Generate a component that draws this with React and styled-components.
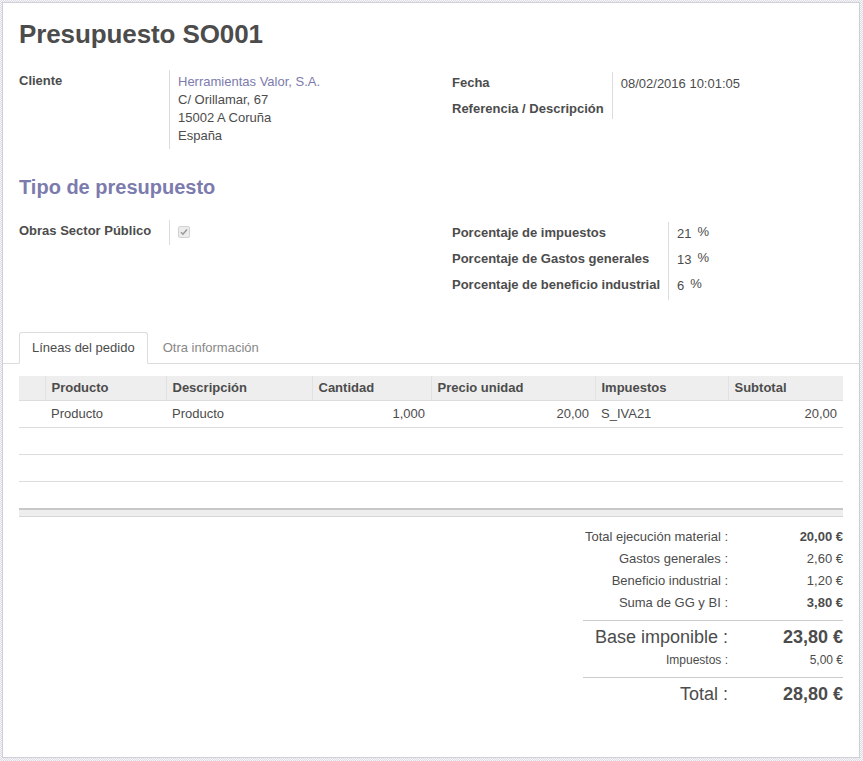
import React from 'react'
import styled, { createGlobalStyle } from 'styled-components'

const GlobalStyle = createGlobalStyle`
  html, body {
    margin: 0;
    padding: 0;
    height: 100%;
  }
  body {
    font-family: "Liberation Sans", Arial, sans-serif;
    font-size: 13px;
    color: #4c4c4c;
    background-color: #fff;
    background-image: repeating-conic-gradient(#dcdce4 0 25%, #f7f7f9 0 50%);
    background-size: 2px 2px;
  }
  #root { height: 100%; }
`

const Page = styled.div`
  box-sizing: border-box;
  height: 100%;
  padding: 2px 3px 3px 2px;
  display: flex;
`

const Sheet = styled.div`
  box-sizing: border-box;
  flex: 1;
  background: #fff;
  border: 1px solid #cfcfd8;
  padding: 16px 16px;
  display: flex;
  flex-direction: column;
`

const Title = styled.h1`
  margin: 0;
  font-size: 26px;
  line-height: 30px;
  font-weight: bold;
  color: #4c4c4c;
  letter-spacing: -0.1px;
`

const Groups = styled.div`
  display: grid;
  grid-template-columns: 433px 1fr;
  align-items: start;
  margin-top: ${p => p.$top}px;
`

const Group = styled.div`
  display: grid;
  grid-template-columns: minmax(150px, max-content) 1fr;
  align-content: start;
  margin-top: ${p => p.$drop || 0}px;
`

const Label = styled.div`
  font-weight: bold;
  line-height: 18px;
  padding: 2px 8px 1px 0;
  white-space: nowrap;
`

const Value = styled.div`
  border-left: 1px solid #dcdcdc;
  line-height: 18px;
  padding: 3px 0 ${p => (p.$tight ? 4 : 5)}px 8px;
`

const Link = styled.div`
  color: #7c7bad;
`

const Percent = styled.span`
  display: inline-block;
  margin-left: 6px;
  vertical-align: top;
  line-height: 14px;
`

const Check = styled.span`
  display: inline-flex;
  align-items: center;
  justify-content: center;
  box-sizing: border-box;
  width: 12px;
  height: 12px;
  border: 1px solid #d2d2d2;
  border-radius: 2px;
  background: #ececec;
`

const SectionTitle = styled.h2`
  margin: 26px 0 0 0;
  font-size: 20px;
  line-height: 24px;
  font-weight: bold;
  color: #7c7bad;
`

const Tabs = styled.div`
  display: flex;
  margin: 32px -16px 0 -16px;
  padding: 0 16px;
  border-bottom: 1px solid #dcdcdc;
`

const Tab = styled.div`
  margin-right: 2px;
  margin-bottom: -1px;
  padding: 6px 12px;
  line-height: 18px;
  border: 1px solid ${p => (p.$active ? '#dcdcdc' : 'transparent')};
  border-bottom-color: ${p => (p.$active ? '#fff' : 'transparent')};
  border-radius: 3px 3px 0 0;
  background: ${p => (p.$active ? '#fff' : 'transparent')};
  color: ${p => (p.$active ? '#4c4c4c' : '#888')};
`

const Table = styled.table`
  width: 100%;
  margin-top: 12px;
  border-collapse: collapse;
  table-layout: fixed;
`

const Th = styled.th`
  box-sizing: border-box;
  width: ${p => (p.$w ? `${p.$w}px` : 'auto')};
  height: 24px;
  padding: 0 6px;
  background: #eee;
  border-bottom: 1px solid #dcdcdc;
  border-left: ${p => (p.$first ? 'none' : '1px solid #e2e2e2')};
  text-align: left;
  font-weight: bold;
  white-space: nowrap;
`

const Td = styled.td`
  height: 26px;
  padding: 0 6px;
  border-bottom: 1px solid #dcdcdc;
  text-align: ${p => (p.$num ? 'right' : 'left')};
  white-space: nowrap;
`

const FootCell = styled.td`
  height: 6px;
  padding: 0;
  background: #eee;
  border-top: 2px solid #c8c8c8;
  border-bottom: 1px solid #d6d6d6;
`

const Totals = styled.div`
  align-self: flex-end;
  width: 260px;
  margin-top: 9px;
  display: grid;
  grid-template-columns: 1fr 115px;
`

const TotLabel = styled.div`
  text-align: right;
  font-size: ${p => p.$size}px;
  line-height: ${p => p.$lh}px;
  padding-top: ${p => p.$pt || 0}px;
  border-top: ${p => (p.$rule ? '1px solid #ccc' : 'none')};
  margin-top: ${p => p.$mt || 0}px;
  white-space: nowrap;
`

const TotValue = styled(TotLabel)`
  font-weight: ${p => (p.$bold ? 'bold' : 'normal')};
`

const lines = [
  { product: 'Producto', desc: 'Producto', qty: '1,000', price: '20,00', tax: 'S_IVA21', subtotal: '20,00' },
]

const totals = [
  { label: 'Total ejecución material :', value: '20,00 €', bold: true, size: 13, lh: 22 },
  { label: 'Gastos generales :', value: '2,60 €', size: 13, lh: 22 },
  { label: 'Beneficio industrial :', value: '1,20 €', size: 13, lh: 22 },
  { label: 'Suma de GG y BI :', value: '3,80 €', bold: true, size: 13, lh: 22 },
  { label: 'Base imponible :', value: '23,80 €', bold: true, size: 18, lh: 26, rule: true, mt: 6, pt: 3 },
  { label: 'Impuestos :', value: '5,00 €', size: 12, lh: 20 },
  { label: 'Total :', value: '28,80 €', bold: true, size: 18, lh: 26, rule: true, mt: 7, pt: 3 },
]

const CheckMark = () => (
  <svg width="8" height="8" viewBox="0 0 8 8">
    <path d="M1 4.2 L3 6.2 L7 1.6" fill="none" stroke="#9a9a9a" strokeWidth="1.6" />
  </svg>
)

const App = () => {
  return (
    <Page>
      <GlobalStyle />
      <Sheet>
        <Title>Presupuesto SO001</Title>

        <Groups $top={21}>
          <Group>
            <Label>Cliente</Label>
            <Value $tight>
              <Link>Herramientas Valor, S.A.</Link>
              <div>C/ Orillamar, 67</div>
              <div>15002 A Coruña</div>
              <div>España</div>
            </Value>
          </Group>
          <Group $drop={2}>
            <Label>Fecha</Label>
            <Value>08/02/2016 10:01:05</Value>
            <Label>Referencia / Descripción</Label>
            <Value />
          </Group>
        </Groups>

        <SectionTitle>Tipo de presupuesto</SectionTitle>

        <Groups $top={21}>
          <Group>
            <Label>Obras Sector Público</Label>
            <Value $tight>
              <Check><CheckMark /></Check>
            </Value>
          </Group>
          <Group $drop={2}>
            <Label>Porcentaje de impuestos</Label>
            <Value>21<Percent>%</Percent></Value>
            <Label>Porcentaje de Gastos generales</Label>
            <Value>13<Percent>%</Percent></Value>
            <Label>Porcentaje de beneficio industrial</Label>
            <Value>6<Percent>%</Percent></Value>
          </Group>
        </Groups>

        <Tabs>
          <Tab $active>Líneas del pedido</Tab>
          <Tab>Otra información</Tab>
        </Tabs>

        <Table>
          <thead>
            <tr>
              <Th $w={26} $first />
              <Th $w={121}>Producto</Th>
              <Th $w={146}>Descripción</Th>
              <Th $w={119}>Cantidad</Th>
              <Th $w={164}>Precio unidad</Th>
              <Th $w={133}>Impuestos</Th>
              <Th>Subtotal</Th>
            </tr>
          </thead>
          <tbody>
            {lines.map((l, i) => (
              <tr key={i}>
                <Td />
                <Td>{l.product}</Td>
                <Td>{l.desc}</Td>
                <Td $num>{l.qty}</Td>
                <Td $num>{l.price}</Td>
                <Td>{l.tax}</Td>
                <Td $num>{l.subtotal}</Td>
              </tr>
            ))}
            {[0, 1, 2].map(i => (
              <tr key={'e' + i}>
                <Td colSpan={7} />
              </tr>
            ))}
          </tbody>
          <tfoot>
            <tr>
              <FootCell colSpan={7} />
            </tr>
          </tfoot>
        </Table>

        <Totals>
          {totals.map(t => (
            <React.Fragment key={t.label}>
              <TotLabel $size={t.size} $lh={t.lh} $rule={t.rule} $mt={t.mt} $pt={t.pt}>{t.label}</TotLabel>
              <TotValue $size={t.size} $lh={t.lh} $rule={t.rule} $mt={t.mt} $pt={t.pt} $bold={t.bold}>{t.value}</TotValue>
            </React.Fragment>
          ))}
        </Totals>
      </Sheet>
    </Page>
  )
}

export default App
